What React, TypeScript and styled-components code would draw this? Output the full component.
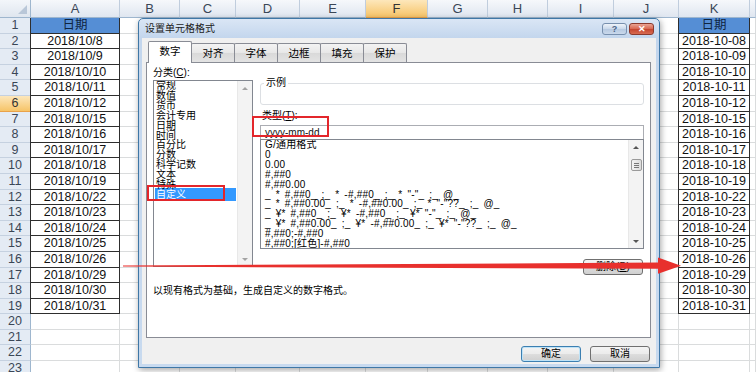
import React from 'react';
import styled, { createGlobalStyle, css } from 'styled-components';

const UI_FONT = `"Liberation Sans", "Noto Sans CJK SC", sans-serif`;

const GlobalStyle = createGlobalStyle`
  *, *::before, *::after { box-sizing: border-box; }
  html, body { margin: 0; padding: 0; background: #fff; }
  body { font-family: ${UI_FONT}; overflow: hidden; }
`;

const COL_WIDTHS = [31, 89, 60, 56, 64, 66, 62, 60, 60, 66, 65, 71, 6];
const COL_NAMES = ['A', 'B', 'C', 'D', 'E', 'F', 'G', 'H', 'I', 'J', 'K', ''];
const ACTIVE_COL = 'F';
const ACTIVE_ROW = 6;
const ROW_COUNT = 23;

const DAYS = [8, 9, 10, 11, 12, 15, 16, 17, 18, 19, 22, 23, 24, 25, 26, 29, 30, 31];
const slashDates = DAYS.map(d => `2018/10/${d}`);
const dashDates = DAYS.map(d => `2018-10-${String(d).padStart(2, '0')}`);

const CATEGORIES = ['常规', '数值', '货币', '会计专用', '日期', '时间', '百分比', '分数', '科学记数', '文本', '特殊', '自定义'];
const FORMATS = [
  'G/通用格式',
  '0',
  '0.00',
  '#,##0',
  '#,##0.00',
  '_ * #,##0_ ;_ * -#,##0_ ;_ * "-"_ ;_ @_',
  '_ * #,##0.00_ ;_ * -#,##0.00_ ;_ * "-"??_ ;_ @_',
  '_ ¥* #,##0_ ;_ ¥* -#,##0_ ;_ ¥* "-"_ ;_ @_',
  '_ ¥* #,##0.00_ ;_ ¥* -#,##0.00_ ;_ ¥* "-"??_ ;_ @_',
  '#,##0;-#,##0',
  '#,##0;[红色]-#,##0',
];
const TABS = ['数字', '对齐', '字体', '边框', '填充', '保护'];

const Sheet = styled.div`
  position: relative;
  width: 756px;
  height: 372px;
  overflow: hidden;
  background: #fff;
`;

const Grid = styled.div`
  display: grid;
  grid-template-columns: ${COL_WIDTHS.map(w => `${w}px`).join(' ')};
  grid-template-rows: 18px;
  grid-auto-rows: 15.6px;
  font-family: "Liberation Sans", "Noto Sans CJK SC", sans-serif;
`;

const Corner = styled.div`
  position: relative;
  background: linear-gradient(#f3f6fa, #dfe6ef);
  border-right: 1px solid #9eb6ce;
  border-bottom: 1px solid #9eb6ce;

  &::after {
    content: '';
    position: absolute;
    right: 3px;
    bottom: 3px;
    border-left: 9px solid transparent;
    border-bottom: 9px solid #b9c7d8;
  }
`;

const orange = css`
  background: linear-gradient(#fde7bb, #f6c468);
  border-bottom-color: #e9a24a;
  color: #333;
`;

const ColHead = styled.div<{ $active?: boolean }>`
  background: linear-gradient(#f6f8fb, #dfe6f0);
  border-right: 1px solid #c0cddd;
  border-bottom: 1px solid #9eb6ce;
  color: #3a4656;
  font-size: 13px;
  line-height: 17px;
  text-align: center;
  ${p => p.$active && orange}
`;

const RowHead = styled.div<{ $active?: boolean }>`
  background: #e4ebf4;
  border-right: 1px solid #9eb6ce;
  border-bottom: 1px solid #c5d1e0;
  color: #3a4656;
  font-size: 12.5px;
  line-height: 14.6px;
  text-align: center;
  ${p => p.$active && orange}
`;

const Cell = styled.div<{ $kind?: 'title' | 'date' }>`
  border-right: 1px solid #dadcdd;
  border-bottom: 1px solid #dadcdd;
  font-size: 12.5px;
  line-height: 14.6px;
  text-align: center;
  color: #111;
  white-space: nowrap;
  ${p => p.$kind && css`
    border-right-color: #2e2e2e;
    border-bottom-color: #2e2e2e;
    box-shadow: -1px 0 0 #2e2e2e;
  `}
  ${p => p.$kind === 'title' && css`
    background: #558ed5;
    color: #0f2540;
  `}
`;

/* dialog window */
const Dialog = styled.div`
  position: absolute;
  left: 138px;
  top: 18px;
  width: 522px;
  height: 350px;
  display: flex;
  flex-direction: column;
  background: linear-gradient(#dae6f5 0px, #c3d6ed 19px, #c8daef 100%);
  border: 1px solid #3f77a6;
  border-radius: 5px 5px 0 0;
  box-shadow: 1px 2px 6px rgba(0, 0, 0, 0.35);
  font-family: ${UI_FONT};
  font-size: 10px;
  color: #000;
`;

const TitleBar = styled.div`
  height: 19px;
  flex: none;
  display: flex;
  align-items: center;
  justify-content: space-between;
  padding: 0 5px 0 6px;
`;

const Title = styled.span`
  font-size: 10px;
  line-height: 12px;
  color: #1b1b1b;
`;

const Caption = styled.div`
  display: flex;
  gap: 2px;
`;

const CaptionButton = styled.div<{ $close?: boolean }>`
  width: 25px;
  height: 12px;
  border: 1px solid #7890ae;
  border-radius: 3px;
  background: linear-gradient(#eef3fa, #c9d8ea 50%, #b6c9e1 51%, #cad9ec);
  color: #4a6286;
  font-size: 9px;
  font-weight: bold;
  line-height: 10px;
  text-align: center;
  ${p => p.$close && css`
    border-color: #8b3a2e;
    background: linear-gradient(#eaa493, #d7654f 50%, #c4442e 51%, #d86b52);
    color: #fff;
  `}
`;

const Body = styled.div`
  flex: 1;
  display: flex;
  flex-direction: column;
  margin: 0 3px 3px;
  background: #f0f0f0;
  padding: 3px 5px 2px 4px;
`;

const TabStrip = styled.div`
  height: 21px;
  flex: none;
  display: flex;
  align-items: flex-end;
  padding-left: 2px;
`;

const Tab = styled.div<{ $selected?: boolean }>`
  height: 19px;
  width: 44px;
  margin-right: -1px;
  border: 1px solid #898c95;
  border-bottom: none;
  border-radius: 2px 2px 0 0;
  background: linear-gradient(#f3f3f3, #e7e7e7 50%, #d9d9d9 51%, #e3e3e3);
  font-size: 10.5px;
  line-height: 18px;
  text-align: center;
  ${p => p.$selected && css`
    position: relative;
    z-index: 1;
    height: 22px;
    margin-bottom: -1px;
    background: #fff;
  `}
`;

const Panel = styled.div`
  position: relative;
  height: 276px;
  flex: none;
  background: #fff;
  border: 1px solid #898c95;
  padding: 3px 6px 0 6px;
  display: flex;
  flex-direction: column;
`;

const TopRow = styled.div`
  display: flex;
  gap: 7px;
`;

const LeftCol = styled.div`
  width: 100px;
  display: flex;
  flex-direction: column;
`;

const RightCol = styled.div`
  flex: 1;
  min-width: 0;
  display: flex;
  flex-direction: column;
`;

const FieldLabel = styled.div<{ $indent?: number; $gap?: number }>`
  height: 14px;
  line-height: 14px;
  font-size: 10px;
  padding-left: ${p => p.$indent ?? 0}px;
  margin-top: ${p => p.$gap ?? 0}px;
`;

const ListBox = styled.div<{ $height: number; $joined?: boolean }>`
  height: ${p => p.$height}px;
  border: 1px solid #828790;
  background: #fff;
  display: flex;
  overflow: hidden;
  ${p => p.$joined && css`
    margin-top: -1px;
  `}
`;

const ListItems = styled.div<{ $latin?: boolean }>`
  flex: 1;
  min-width: 0;
  padding: 0 1px;
  font-size: 10px;
  line-height: 9.9px;
  ${p => p.$latin && css`
    padding-left: 3px;
    letter-spacing: 0.2px;
    word-spacing: 2px;
  `}
`;

const ListItem = styled.div<{ $selected?: boolean }>`
  white-space: pre;
  padding-left: 1px;
  ${p => p.$selected && css`
    background: #3399ff;
    color: #fff;
    padding-top: 1.5px;
    padding-bottom: 1.5px;
    margin: -1.5px 0;
  `}
`;

const VScroll = styled.div`
  width: 15px;
  flex: none;
  background: #f3f3f3;
  border-left: 1px solid #e8e8e8;
  display: flex;
  flex-direction: column;
  align-items: center;
`;

const ArrowBox = styled.div<{ $end?: boolean }>`
  height: 14px;
  width: 100%;
  display: flex;
  align-items: center;
  justify-content: center;
  ${p => p.$end && css`
    margin-top: auto;
  `}
`;

const ArrowGlyph = styled.span<{ $down?: boolean; $dim?: boolean }>`
  width: 0;
  height: 0;
  border-left: 3px solid transparent;
  border-right: 3px solid transparent;
  ${p => p.$down
    ? css`border-top: 3px solid ${p.$dim ? '#a3a3a3' : '#555'};`
    : css`border-bottom: 3px solid ${p.$dim ? '#a3a3a3' : '#555'};`}
`;

const Thumb = styled.div`
  width: 11px;
  height: 12px;
  margin-top: 5px;
  border: 1px solid #9a9a9a;
  border-radius: 2px;
  background:
    linear-gradient(#777, #777) center 3px / 5px 1px no-repeat,
    linear-gradient(#777, #777) center 5px / 5px 1px no-repeat,
    linear-gradient(#777, #777) center 7px / 5px 1px no-repeat,
    linear-gradient(90deg, #f4f4f4, #dcdcdc);
`;

const SampleGroup = styled.fieldset`
  margin: 11px 0 0;
  padding: 0;
  height: 28px;
  border: 1px solid #dcdfe3;
  border-radius: 3px;

  legend {
    margin-left: 3px;
    padding: 0 2px;
    font-size: 10px;
    line-height: 12px;
  }
`;

const TypeInput = styled.div`
  height: 15px;
  margin-top: 2px;
  border: 1px solid #abadb3;
  padding-left: 4px;
  font-size: 10px;
  line-height: 13px;
  color: #111;
`;

const ButtonRow = styled.div`
  display: flex;
  justify-content: flex-end;
  margin-top: 10px;
  padding-right: 1px;
`;

const Button = styled.div<{ $primary?: boolean }>`
  width: 60px;
  height: 16px;
  border: 1px solid ${p => (p.$primary ? '#3c7fb1' : '#707070')};
  border-radius: 3px;
  background: linear-gradient(#f4f4f4, #ebebeb 50%, #dddddd 51%, #d0d0d0);
  ${p => p.$primary && css`
    box-shadow: inset 0 0 0 1px #bfe3f7;
  `}
  font-size: 10px;
  line-height: 14px;
  text-align: center;
`;

const Description = styled.div`
  margin-top: 10px;
  font-size: 10px;
  line-height: 12px;
`;

const Footer = styled.div`
  display: flex;
  justify-content: flex-end;
  gap: 9px;
  padding: 8px 1px 0 0;
`;

const RedMark = styled.div<{ $left: number; $top: number; $w: number; $h: number }>`
  position: absolute;
  left: ${p => p.$left}px;
  top: ${p => p.$top}px;
  width: ${p => p.$w}px;
  height: ${p => p.$h}px;
  border: 2px solid #e3262b;
  pointer-events: none;
`;

const ArrowLayer = styled.svg`
  position: absolute;
  left: 0;
  top: 0;
  width: 756px;
  height: 372px;
  pointer-events: none;
`;

const ScrollBar: React.FC<{ thumb?: boolean; dim?: boolean }> = ({ thumb, dim }) => (
  <VScroll>
    <ArrowBox><ArrowGlyph $dim={dim} /></ArrowBox>
    {thumb && <Thumb />}
    <ArrowBox $end><ArrowGlyph $down $dim={dim} /></ArrowBox>
  </VScroll>
);

const cellContent = (col: number, row: number) => {
  if (col !== 0 && col !== 10) return null;
  if (row === 1) return { kind: 'title' as const, text: '日期' };
  if (row >= 2 && row <= 19) {
    const list = col === 0 ? slashDates : dashDates;
    return { kind: 'date' as const, text: list[row - 2] };
  }
  return null;
};

const Spreadsheet = () => {
  const rows = Array.from({ length: ROW_COUNT }, (_, i) => i + 1);
  return (
    <Grid>
      <Corner />
      {COL_NAMES.map((name, i) => (
        <ColHead key={`h${i}`} $active={name === ACTIVE_COL}>{name}</ColHead>
      ))}
      {rows.map(r => (
        <React.Fragment key={r}>
          <RowHead $active={r === ACTIVE_ROW}>{r}</RowHead>
          {COL_NAMES.map((_, c) => {
            const content = cellContent(c, r);
            return (
              <Cell key={c} $kind={content?.kind}>{content?.text}</Cell>
            );
          })}
        </React.Fragment>
      ))}
    </Grid>
  );
};

const FormatCellsDialog = () => (
  <Dialog>
    <TitleBar>
      <Title>设置单元格格式</Title>
      <Caption>
        <CaptionButton>?</CaptionButton>
        <CaptionButton $close>✕</CaptionButton>
      </Caption>
    </TitleBar>
    <Body>
      <TabStrip>
        {TABS.map((t, i) => <Tab key={t} $selected={i === 0}>{t}</Tab>)}
      </TabStrip>
      <Panel>
        <TopRow>
          <LeftCol>
            <FieldLabel>分类(<u>C</u>):</FieldLabel>
            <ListBox $height={187}>
              <ListItems>
                {CATEGORIES.map(c => (
                  <ListItem key={c} $selected={c === '自定义'}>{c}</ListItem>
                ))}
              </ListItems>
              <ScrollBar dim />
            </ListBox>
          </LeftCol>
          <RightCol>
            <SampleGroup>
              <legend>示例</legend>
            </SampleGroup>
            <FieldLabel $indent={2} $gap={4}>类型(<u>T</u>):</FieldLabel>
            <TypeInput>yyyy-mm-dd</TypeInput>
            <ListBox $height={110} $joined>
              <ListItems $latin>
                {FORMATS.map(f => <ListItem key={f}>{f}</ListItem>)}
              </ListItems>
              <ScrollBar thumb />
            </ListBox>
            <ButtonRow>
              <Button>删除(<u>D</u>)</Button>
            </ButtonRow>
          </RightCol>
        </TopRow>
        <Description>以现有格式为基础，生成自定义的数字格式。</Description>
        <RedMark $left={0} $top={122} $w={78} $h={16} />
        <RedMark $left={105} $top={53} $w={77} $h={21} />
      </Panel>
      <Footer>
        <Button $primary>确定</Button>
        <Button>取消</Button>
      </Footer>
    </Body>
  </Dialog>
);

const App = () => (
  <>
    <GlobalStyle />
    <Sheet>
      <Spreadsheet />
      <FormatCellsDialog />
      <ArrowLayer viewBox="0 0 756 372">
        <polygon points="123,265.4 660,262.6 660,268.8 123,266.6" fill="#e8302d" />
        <polygon points="658,257.5 681,265.7 658,273.8" fill="#e8302d" />
      </ArrowLayer>
    </Sheet>
  </>
);

export default App;
